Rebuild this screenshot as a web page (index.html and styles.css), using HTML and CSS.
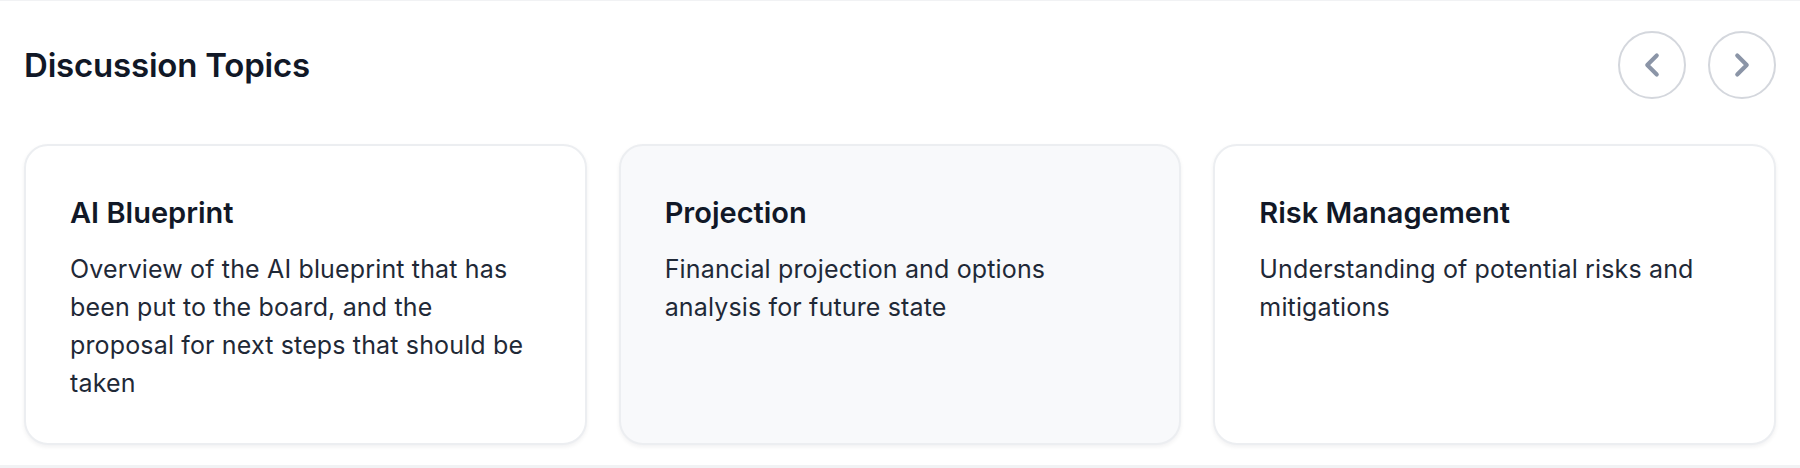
FILE: index.html
```html
<!DOCTYPE html>
<html lang="en">
<head>
    <meta charset="UTF-8">
    <meta name="viewport" content="width=device-width, initial-scale=1.0">
    <title>Discussion Topics</title>
    <link rel="stylesheet" href="styles.css">
</head>
<body>
    <section class="topics">
        <div class="topics-header">
            <h2 class="topics-title">Discussion Topics</h2>
            <div class="nav">
                <button class="nav-btn" aria-label="Previous">
                    <svg width="38" height="38" viewBox="0 0 24 24" fill="none" stroke="currentColor" stroke-width="2.6" stroke-linecap="round" stroke-linejoin="round"><path d="m15 18-6-6 6-6"/></svg>
                </button>
                <button class="nav-btn" aria-label="Next">
                    <svg width="38" height="38" viewBox="0 0 24 24" fill="none" stroke="currentColor" stroke-width="2.6" stroke-linecap="round" stroke-linejoin="round"><path d="m9 18 6-6-6-6"/></svg>
                </button>
            </div>
        </div>

        <div class="cards">
            <div class="card">
                <h3 class="card-title">AI Blueprint</h3>
                <p class="card-text">Overview of the AI blueprint that has been put to the board, and the proposal for next steps that should be taken</p>
            </div>
            <div class="card active">
                <h3 class="card-title">Projection</h3>
                <p class="card-text">Financial projection and options analysis for future state</p>
            </div>
            <div class="card">
                <h3 class="card-title">Risk Management</h3>
                <p class="card-text">Understanding of potential risks and mitigations</p>
            </div>
        </div>
    </section>
</body>
</html>
```

FILE: styles.css
```css
:root {
    --text-dark: #111827;
    --text-body: #1f2937;
    --muted: #8b95a7;
}

* {
    margin: 0;
    padding: 0;
    box-sizing: border-box;
    font-family: 'Inter', 'Noto Sans', sans-serif;
}

body {
    background: #f1f2f4;
    padding: 1px 0 2px;
}

.topics {
    background: #ffffff;
    padding: 30px 24px 20px;
}

.topics-header {
    display: flex;
    justify-content: space-between;
    align-items: center;
    margin-bottom: 45px;
}

.topics-title {
    font-size: 33px;
    font-weight: 600;
    color: var(--text-dark);
    letter-spacing: -0.2px;
}

.nav {
    display: flex;
    gap: 22px;
}

.nav-btn {
    width: 68px;
    height: 68px;
    border-radius: 50%;
    border: 2px solid #d4d7dd;
    background: #ffffff;
    color: var(--muted);
    display: flex;
    align-items: center;
    justify-content: center;
    cursor: pointer;
}

.cards {
    display: grid;
    grid-template-columns: repeat(3, 1fr);
    gap: 32px;
}

.card {
    height: 301px;
    border: 2px solid #eceef1;
    border-radius: 24px;
    padding: 49px 44px 40px;
    background: #ffffff;
    box-shadow: 0 2px 4px rgba(17, 24, 39, 0.06);
}

.card.active {
    background: #f8f9fb;
}

.card-title {
    font-size: 29px;
    font-weight: 600;
    color: var(--text-dark);
    line-height: 36px;
    margin-bottom: 19px;
}

.card-text {
    font-size: 25px;
    line-height: 38px;
    letter-spacing: 0.15px;
    color: var(--text-body);
}
```
